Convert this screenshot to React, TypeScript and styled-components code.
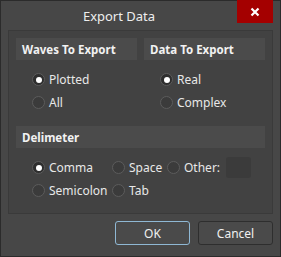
import React from "react";
import styled, { createGlobalStyle } from "styled-components";

const Global = createGlobalStyle`
  html, body { margin: 0; padding: 0; background: #474747; }
  body { font-family: "Noto Sans", "Open Sans", sans-serif; }
`;

const Window = styled.div`
  width: 281px;
  height: 257px;
  box-sizing: border-box;
  background: #474747;
  border: 1px solid #2b2b2b;
  display: flex;
  flex-direction: column;
`;

const TitleBar = styled.div`
  height: 29px;
  display: flex;
  align-items: flex-start;
  padding-right: 7px;
`;

const Title = styled.div`
  flex: 1;
  height: 22px;
  display: flex;
  align-items: center;
  justify-content: center;
  padding-top: 4px;
  color: #eeeeee;
  font-size: 13px;
`;

const Close = styled.div`
  width: 36px;
  height: 23px;
  margin-top: -1px;
  background: #a40000;
  display: flex;
  align-items: center;
  justify-content: center;
`;

const Body = styled.div`
  padding: 0 7px;
`;

const Panel = styled.div`
  height: 184px;
  box-sizing: border-box;
  border: 1px solid #3a3a3a;
  background: #424242;
  padding: 7px 7px 0 7px;
`;

const Columns = styled.div`
  display: grid;
  grid-template-columns: 121px 121px;
  column-gap: 7px;
`;

const Header = styled.div`
  height: 22px;
  background: #4b4b4b;
  color: #f2f2f2;
  font-weight: bold;
  font-size: 11.5px;
  display: flex;
  align-items: center;
  padding-left: 6px;
`;

const Spacer = styled.div`
  height: 12px;
`;

const Group = styled.div<{ $top: number }>`
  display: flex;
  flex-direction: column;
  padding-top: ${(p) => p.$top}px;
  padding-left: 16px;
`;

const Row = styled.div`
  height: 23px;
  display: flex;
  align-items: center;
`;

const Option = styled.div<{ $w?: number }>`
  display: flex;
  align-items: center;
  width: ${(p) => (p.$w ? `${p.$w}px` : "auto")};
  color: #e8e8e8;
  font-size: 12px;
`;

const Dot = styled.span<{ $on?: boolean }>`
  width: 13px;
  height: 13px;
  box-sizing: border-box;
  border-radius: 50%;
  border: 1px solid #5c5c5c;
  background: ${(p) => (p.$on ? "#2e2e2e" : "#3b3b3b")};
  margin-right: 4px;
  display: inline-flex;
  align-items: center;
  justify-content: center;
  &::after {
    content: "";
    width: 6px;
    height: 6px;
    border-radius: 50%;
    background: ${(p) => (p.$on ? "#ffffff" : "transparent")};
  }
`;

const Input = styled.div`
  width: 25px;
  height: 21px;
  margin-left: 6px;
  background: #3b3b3b;
  border-radius: 3px;
`;

const Buttons = styled.div`
  display: flex;
  justify-content: flex-end;
  gap: 8px;
  padding: 7px 7px 0 0;
`;

const Button = styled.div<{ $primary?: boolean }>`
  width: 75px;
  height: 24px;
  box-sizing: border-box;
  border-radius: 3px;
  border: 1px solid ${(p) => (p.$primary ? "#8fb8d4" : "#2e2e2e")};
  background: #4a4a4a;
  color: #f0f0f0;
  font-size: 12px;
  display: flex;
  align-items: center;
  justify-content: center;
`;

const Radio = ({ label, on, w }: { label: string; on?: boolean; w?: number }) => (
  <Option $w={w}>
    <Dot $on={on} />
    {label}
  </Option>
);

export default function App() {
  return (
    <>
      <Global />
      <Window>
        <TitleBar>
          <Title>Export Data</Title>
          <Close>
            <svg width="10" height="10" viewBox="0 0 10 10">
              <path d="M1.5 1.5 L8.5 8.5 M8.5 1.5 L1.5 8.5" stroke="#fff" strokeWidth="2.2" />
            </svg>
          </Close>
        </TitleBar>
        <Body>
          <Panel>
            <Columns>
              <div>
                <Header>Waves To Export</Header>
                <Group $top={8}>
                  <Row><Radio label="Plotted" on /></Row>
                  <Row><Radio label="All" /></Row>
                </Group>
              </div>
              <div>
                <Header>Data To Export</Header>
                <Group $top={8}>
                  <Row><Radio label="Real" on /></Row>
                  <Row><Radio label="Complex" /></Row>
                </Group>
              </div>
            </Columns>
            <Spacer />
            <Header>Delimeter</Header>
            <Group $top={8}>
              <Row>
                <Radio label="Comma" on w={80} />
                <Radio label="Space" w={55} />
                <Radio label="Other:" />
                <Input />
              </Row>
              <Row>
                <Radio label="Semicolon" w={80} />
                <Radio label="Tab" />
              </Row>
            </Group>
          </Panel>
        </Body>
        <Buttons>
          <Button $primary>OK</Button>
          <Button>Cancel</Button>
        </Buttons>
      </Window>
    </>
  );
}
